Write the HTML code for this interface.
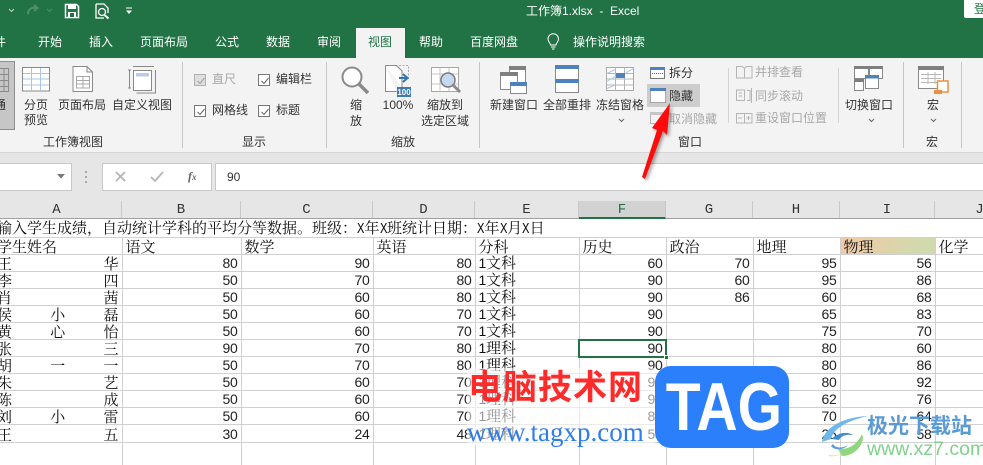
<!DOCTYPE html>
<html><head><meta charset="utf-8"><style>
*{box-sizing:border-box}
html,body{margin:0;padding:0}
body{width:983px;height:465px;overflow:hidden;position:relative;background:#fff;font-family:"Liberation Sans","Noto Sans CJK SC",sans-serif;font-size:12px;color:#333}
.a{position:absolute;white-space:nowrap;line-height:16px}
.c{position:absolute;white-space:nowrap;line-height:16px;transform:translateX(-50%)}
.t{color:#fff;top:34px;font-size:12px}
.g{color:#a8a8a8}
.s{position:absolute;width:1px;background:#c6c6c6}
.cb{position:absolute;width:12px;height:12px;border:1px solid #777;background:#fff}
.cb svg{position:absolute;left:1px;top:1px}
.h{position:absolute;top:201px;height:17px;line-height:18px;text-align:center;font-family:"Liberation Mono",monospace;font-size:14px;color:#333;border-right:1px solid #c8c8c8}
table{position:absolute;left:-4px;top:219px;border-collapse:collapse;table-layout:fixed;width:1040px;font-family:"Noto Serif CJK SC","Liberation Serif",serif;font-size:15px;color:#111}
td{border-right:1px solid #d0d0d0;border-bottom:1px solid #d0d0d0;padding:0 3px 0 1px;height:17px;line-height:15px;vertical-align:bottom;white-space:nowrap;overflow:hidden}
td.n{text-align:right;font-family:"Liberation Sans",sans-serif;font-size:14px;letter-spacing:-.3px;color:#222}
td.j{text-align-last:justify;text-align:justify;white-space:normal;padding-right:3px}
td.e{padding-left:3px}
i{font-style:normal;font-family:"Liberation Sans",sans-serif;font-size:14px;letter-spacing:-.3px}
b.x{display:inline-block;width:7.500px;font-weight:normal;font-family:"Liberation Mono",monospace;font-size:15px;transform:scaleX(.83);transform-origin:0 50%}
</style></head><body>
<!-- title and tabs -->
<div style="position:absolute;left:0;top:0;width:983px;height:58px;background:#217346"></div>
<svg style="position:absolute;left:0;top:0" width="150" height="24" fill="none">
<path d="M9 9l2.500 2.500L14 9" stroke="#bcd6c7"/>
<path d="M28 14c0-5 4-7 8-6m-2-3l3.500 3-3.500 3" stroke="#4f8f6b" stroke-width="2"/>
<path d="M47 9l2.500 2.500L52 9" stroke="#4f8f6b"/>
<path d="M65.500 4.500h11l2 2v11h-13z" stroke="#fff" stroke-width="1.500"/><rect x="68" y="5" width="8" height="4" fill="#fff"/><rect x="68" y="12" width="8" height="6" fill="#fff"/><rect x="70" y="13" width="4" height="4" fill="#217346"/>
<path d="M96 4h8l4 4v5M96 4v14h8" stroke="#fff" stroke-width="1.300"/><circle cx="102" cy="12" r="3.500" stroke="#fff" stroke-width="1.300"/><path d="M104.500 15l4 3.500" stroke="#fff" stroke-width="2"/>
<path d="M126 8h6" stroke="#fff"/><path d="M126 10.500h6l-3 3.500z" fill="#fff"/>
</svg>
<div class="a" style="left:526px;top:3px;color:#fff;font-size:12px">工作簿1.xlsx&nbsp; - &nbsp;Excel</div>
<div style="position:absolute;left:964px;top:0;width:19px;height:18px;background:#fff;border-radius:0 0 0 2px;color:#217346;font-size:12px;line-height:18px;padding-left:10px;overflow:hidden;white-space:nowrap">登</div>
<div style="position:absolute;left:356px;top:28px;width:49px;height:30px;background:#f3f3f3"></div>
<div class="a t" style="left:-18px">文件</div>
<div class="a t" style="left:38px">开始</div>
<div class="a t" style="left:89px">插入</div>
<div class="a t" style="left:140px">页面布局</div>
<div class="a t" style="left:215px">公式</div>
<div class="a t" style="left:266px">数据</div>
<div class="a t" style="left:317px">审阅</div>
<div class="a t" style="left:368px;color:#217346">视图</div>
<div class="a t" style="left:419px">帮助</div>
<div class="a t" style="left:470px">百度网盘</div>
<svg style="position:absolute;left:546px;top:33px" width="15" height="18" fill="none" stroke="#fff"><path d="M4.500 12c0-2-2.500-3-2.500-6a5.200 5.200 0 0 1 10.500 0c0 3-2.500 4-2.500 6zM5 14h4.500M6 16h2.500"/></svg>
<div class="a t" style="left:573px">操作说明搜索</div>

<!-- ribbon -->
<div style="position:absolute;left:0;top:58px;width:983px;height:95px;background:#f3f3f3;border-bottom:1px solid #d6d6d6"></div>
<div style="position:absolute;left:-4px;top:61px;width:19px;height:69px;background:#c6c6c6;border:1px solid #8f8f8f"></div>
<div class="a" style="left:-18px;top:97px">普通</div>
<div class="s" style="left:182px;top:62px;height:86px"></div>
<div class="s" style="left:326px;top:62px;height:86px"></div>
<div class="s" style="left:479px;top:62px;height:86px"></div>
<div class="s" style="left:728px;top:68px;height:55px;background:#d4d4d4"></div>
<div class="s" style="left:838px;top:68px;height:55px;background:#d4d4d4"></div>
<div class="s" style="left:903px;top:62px;height:86px"></div>
<div class="s" style="left:961px;top:62px;height:86px"></div>

<svg style="position:absolute;left:0;top:58px" width="983" height="90" fill="none">
<!-- normal -->
<path d="M-1 10.500h9.500v23H-1M0 16.500h8M0 22.500h8M0 28.500h8M4 10v23" stroke="#8a8a8a"/>
<!-- page break -->
<rect x="22.500" y="9.500" width="27" height="23.500" fill="#fff" stroke="#8a8a8a"/>
<path d="M23 15.500h26M23 21h26M23 27h26M31.500 10v23M40.500 10v23" stroke="#a9c4e4"/>
<!-- page layout -->
<path d="M73 8.500h14l5.500 5.500v19.500h-19.500zM87 8.500v5.500h5.500" fill="#fff" stroke="#8a8a8a"/>
<path d="M76.500 18.500h13v11.500h-13zM76.500 22.500h13M76.500 26h13M83 18.500v11.500" stroke="#a8a8a8"/>
<!-- custom -->
<rect x="133.500" y="12.500" width="18" height="20" fill="#fff" stroke="#8a8a8a"/>
<rect x="136" y="15" width="13" height="3.500" fill="#b8cde8"/>
<path d="M133 8.500h21M155.500 12v23h-19M129.500 12v18M128 12h3M128 30h3" stroke="#8a8a8a"/>
<!-- zoom -->
<circle cx="352" cy="19" r="9.500" fill="#fff" stroke="#8a8a8a" stroke-width="2"/>
<path d="M359 26l9 9" stroke="#8a8a8a" stroke-width="3.500"/>
<!-- 100 -->
<path d="M385.500 7.500h11l5.500 5.500v16M385.500 7.500v26h11" fill="#fff" stroke="#8a8a8a"/>
<path d="M399 7.500h9.500v15" stroke="#a8a8a8" stroke-dasharray="2 1.500"/>
<path d="M399 20h8M403 16l4.500 4-4.500 4" stroke="#2f75b5" stroke-width="2"/>
<rect x="397" y="29" width="14" height="10" fill="#3e78b5"/>
<text x="404" y="37" text-anchor="middle" font-size="8" font-weight="bold" fill="#fff" font-family="Liberation Sans">100</text>
<!-- zoom to selection -->
<rect x="431.500" y="9.500" width="27" height="24" fill="#fff" stroke="#a8a8a8"/>
<path d="M432 16h26M432 26h26M440 10v23M449 10v23" stroke="#c6c6c6"/>
<circle cx="448" cy="22" r="7" fill="#c7d9ee" stroke="#7b7b7b" stroke-width="1.500"/>
<path d="M453 27l7 7" stroke="#8a8a8a" stroke-width="3"/>
<!-- new window -->
<rect x="509.500" y="8.500" width="16" height="16" fill="#fff" stroke="#8a8a8a"/><rect x="509" y="8" width="17" height="4" fill="#7f7f7f"/>
<rect x="500.500" y="14.500" width="17" height="17" fill="#fff" stroke="#8a8a8a"/><rect x="500" y="14" width="18" height="4" fill="#7f7f7f"/>
<rect x="510.500" y="24.500" width="16" height="11" fill="#fff" stroke="#8a8a8a"/><rect x="510" y="24" width="17" height="4" fill="#4f81bd"/>
<!-- arrange all -->
<rect x="555.500" y="7.500" width="23" height="27" fill="#fff" stroke="#8a8a8a"/>
<rect x="555" y="7" width="24" height="4" fill="#4f81bd"/><rect x="555" y="21" width="24" height="4" fill="#4f81bd"/>
<!-- freeze -->
<rect x="606.500" y="9.500" width="27" height="23" fill="#fff" stroke="#a8a8a8"/>
<path d="M607 15.500h26M607 21h26M607 27h26M615.500 10v23M624.500 10v23" stroke="#b5b5b5"/>
<rect x="616" y="15" width="9" height="5" fill="#4f81bd"/>
<path d="M606 16l10-5M606 24l10-6M606 31l9-4M626 15l8-5" stroke="#a9c4e4"/>
<path d="M619 61l2.500 2.500 2.500-2.500M869 61l2.500 2.500 2.500-2.500M931 61l2.500 2.500 2.500-2.500" stroke="#666"/>
<!-- hide box -->
<rect x="647" y="26" width="53" height="23" fill="#cdcdcd"/>
<!-- split -->
<rect x="650.500" y="9.500" width="14" height="11" fill="#fff" stroke="#777"/><rect x="650" y="9" width="15" height="3" fill="#4f81bd"/><path d="M652 15.500h11" stroke="#2f75b5" stroke-dasharray="1 1"/>
<!-- hide -->
<rect x="650.500" y="31.500" width="15" height="13" fill="#fff" stroke="#666" stroke-dasharray="1 1"/><rect x="650" y="30" width="16" height="3" fill="#4f81bd"/>
<!-- unhide -->
<rect x="650.500" y="54.500" width="14" height="11" fill="#f3f3f3" stroke="#b5b5b5"/><rect x="650" y="54" width="15" height="3" fill="#c6c6c6"/>
<!-- side by side -->
<path d="M736.500 8.500h6l2 2v9.500h-8zM744.500 10.500l2-2h5.500v11.500h-7.500" stroke="#b5b5b5"/>
<path d="M736.500 32v10.500h8v-10.500zM747 32.500h3v10h-3M739 35h3M739 38h3M751.500 30v15" stroke="#b5b5b5"/>
<path d="M736.500 55.500h8v9.500h-8zM744.500 55.500h7.500v9.500h-7.500zM738 60h4M746.500 60h4M748.500 58v4" stroke="#b5b5b5"/>
<!-- switch window -->
<rect x="854.500" y="8.500" width="14" height="12" fill="#fff" stroke="#8a8a8a"/><rect x="854" y="8" width="15" height="3" fill="#7f7f7f"/>
<rect x="869.500" y="8.500" width="13" height="12" fill="#fff" stroke="#8a8a8a"/><rect x="869" y="8" width="14" height="3" fill="#7f7f7f"/>
<rect x="854.500" y="21.500" width="9" height="11" fill="#fff" stroke="#8a8a8a"/><rect x="854" y="21" width="10" height="3" fill="#7f7f7f"/>
<rect x="865.500" y="17.500" width="13" height="13" fill="#fff" stroke="#8a8a8a"/><rect x="865" y="17" width="14" height="3.500" fill="#4f81bd"/>
<!-- macro -->
<rect x="918.500" y="8.500" width="25" height="22" fill="#fff" stroke="#8a8a8a"/><rect x="918" y="8" width="26" height="4" fill="#7f7f7f"/>
<path d="M921 16.500h20M921 20.500h20M921 24.500h20M928 14v12M935 14v12" stroke="#b8b8b8"/>
<path d="M937.500 23h10.500v11h-10.500z" fill="#fff" stroke="#e8923f" stroke-width="1.500"/><path d="M934 32h8v4h-8z" fill="#e8923f"/>
</svg>

<div class="cb g" style="left:194px;top:74px;background:#dedede;border-color:#b0b0b0"><svg width="10" height="10" fill="none" stroke="#a0a0a0"><path d="M1.500 5l2.500 2.500 4.500-5.500"/></svg></div>
<div class="cb" style="left:258px;top:74px"><svg width="10" height="10" fill="none" stroke="#666"><path d="M1.500 5l2.500 2.500 4.500-5.500"/></svg></div>
<div class="cb" style="left:194px;top:105px"><svg width="10" height="10" fill="none" stroke="#666"><path d="M1.500 5l2.500 2.500 4.500-5.500"/></svg></div>
<div class="cb" style="left:258px;top:105px"><svg width="10" height="10" fill="none" stroke="#666"><path d="M1.500 5l2.500 2.500 4.500-5.500"/></svg></div>
<div class="a g" style="left:212px;top:71px">直尺</div>
<div class="a" style="left:276px;top:71px">编辑栏</div>
<div class="a" style="left:212px;top:102px">网格线</div>
<div class="a" style="left:276px;top:102px">标题</div>

<div class="c" style="left:36px;top:97px">分页</div>
<div class="c" style="left:36px;top:112px">预览</div>
<div class="c" style="left:82px;top:97px">页面布局</div>
<div class="c" style="left:142px;top:97px">自定义视图</div>
<div class="c" style="left:73px;top:134px">工作簿视图</div>
<div class="c" style="left:254px;top:134px">显示</div>
<div class="c" style="left:356px;top:97px">缩</div>
<div class="c" style="left:356px;top:113px">放</div>
<div class="c" style="left:398px;top:97px">100%</div>
<div class="c" style="left:445px;top:97px">缩放到</div>
<div class="c" style="left:445px;top:113px">选定区域</div>
<div class="c" style="left:403px;top:134px">缩放</div>
<div class="c" style="left:514px;top:97px">新建窗口</div>
<div class="c" style="left:567px;top:97px">全部重排</div>
<div class="c" style="left:620px;top:97px">冻结窗格</div>
<div class="a" style="left:669px;top:65px">拆分</div>
<div class="a" style="left:669px;top:88px">隐藏</div>
<div class="a g" style="left:669px;top:111px">取消隐藏</div>
<div class="c" style="left:690px;top:134px">窗口</div>
<div class="a g" style="left:755px;top:64px">并排查看</div>
<div class="a g" style="left:755px;top:88px">同步滚动</div>
<div class="a g" style="left:755px;top:110px">重设窗口位置</div>
<div class="c" style="left:869px;top:97px">切换窗口</div>
<div class="c" style="left:933px;top:97px">宏</div>
<div class="c" style="left:932px;top:134px">宏</div>

<!-- formula bar -->
<div style="position:absolute;left:0;top:153px;width:983px;height:48px;background:#e6e6e6"></div>
<div style="position:absolute;left:-2px;top:163px;width:74px;height:28px;background:#fff;border:1px solid #c8c8c8"></div>
<svg style="position:absolute;left:56px;top:172px" width="10" height="8"><path d="M1 2h8l-4 4.500z" fill="#777"/></svg>
<svg style="position:absolute;left:84px;top:170px" width="6" height="14" fill="#aaa"><rect x="1" y="1" width="2" height="2"/><rect x="1" y="6" width="2" height="2"/><rect x="1" y="11" width="2" height="2"/></svg>
<div style="position:absolute;left:102px;top:163px;width:110px;height:28px;background:#fff;border:1px solid #c8c8c8"></div>
<svg style="position:absolute;left:112px;top:170px" width="60" height="14" fill="none" stroke="#b5b5b5" stroke-width="1.800"><path d="M4 2l9 9M13 2l-9 9"/><path d="M39 7l4 4 8-9"/></svg>
<div class="a" style="left:188px;top:168px;font-family:'Liberation Serif',serif;font-style:italic;font-weight:bold;color:#666;font-size:12px">f<span style="font-size:9px">x</span></div>
<div style="position:absolute;left:215px;top:163px;width:770px;height:28px;background:#fff;border:1px solid #c8c8c8"></div>
<div class="a" style="left:227px;top:169px;font-size:12px;color:#333">90</div>

<!-- column headers -->
<div style="position:absolute;left:0;top:201px;width:983px;height:18px;background:#e6e6e6;border-bottom:1px solid #a0a0a0"></div>
<div class="h" style="left:0;width:122px;padding-left:0"><span style="position:relative;left:-4px">A</span></div>
<div class="h" style="left:122px;width:119px">B</div>
<div class="h" style="left:241px;width:132px">C</div>
<div class="h" style="left:373px;width:102px">D</div>
<div class="h" style="left:475px;width:104px">E</div>
<div class="h" style="left:579px;width:87px;height:18px;background:#d2d2d2;border-bottom:2px solid #217346;color:#217346">F</div>
<div class="h" style="left:666px;width:87px">G</div>
<div class="h" style="left:753px;width:87px">H</div>
<div class="h" style="left:840px;width:95px">I</div>
<div class="h" style="left:935px;width:90px">J</div>

<!-- grid -->
<table>
<colgroup><col style="width:126px"><col style="width:119px"><col style="width:132px"><col style="width:102px"><col style="width:104px"><col style="width:87px"><col style="width:87px"><col style="width:87px"><col style="width:95px"><col style="width:101px"></colgroup>
<tr style="height:18px"><td colspan="10" style="border-right:0;height:18px;padding-left:1px">输入学生成绩，自动统计学科的平均分等数据。班级：<b class="x">X</b>年<b class="x">X</b>班统计日期：<b class="x">X</b>年<b class="x">X</b>月<b class="x">X</b>日</td></tr>
<tr><td>学生姓名</td><td class="e">语文</td><td class="e">数学</td><td class="e">英语</td><td class="e">分科</td><td class="e">历史</td><td class="e">政治</td><td class="e">地理</td><td class="e" style="background:linear-gradient(120deg,#f2c9a8,#cbdcae)">物理</td><td class="e">化学</td></tr>
<tr><td class="j">王华</td><td class="n">80</td><td class="n">90</td><td class="n">80</td><td class="e"><i>1</i>文科</td><td class="n">60</td><td class="n">70</td><td class="n">95</td><td class="n">56</td><td></td></tr>
<tr><td class="j">李四</td><td class="n">50</td><td class="n">70</td><td class="n">80</td><td class="e"><i>1</i>文科</td><td class="n">90</td><td class="n">60</td><td class="n">95</td><td class="n">86</td><td></td></tr>
<tr><td class="j">肖茜</td><td class="n">50</td><td class="n">60</td><td class="n">80</td><td class="e"><i>1</i>文科</td><td class="n">90</td><td class="n">86</td><td class="n">60</td><td class="n">68</td><td></td></tr>
<tr><td class="j">侯小磊</td><td class="n">50</td><td class="n">60</td><td class="n">70</td><td class="e"><i>1</i>文科</td><td class="n">90</td><td></td><td class="n">65</td><td class="n">83</td><td></td></tr>
<tr><td class="j">黄心怡</td><td class="n">50</td><td class="n">60</td><td class="n">70</td><td class="e"><i>1</i>文科</td><td class="n">90</td><td></td><td class="n">75</td><td class="n">70</td><td></td></tr>
<tr><td class="j">张三</td><td class="n">90</td><td class="n">70</td><td class="n">80</td><td class="e"><i>1</i>理科</td><td class="n">90</td><td></td><td class="n">80</td><td class="n">60</td><td></td></tr>
<tr><td class="j">胡一一</td><td class="n">50</td><td class="n">70</td><td class="n">80</td><td class="e"><i>1</i>理科</td><td class="n">90</td><td></td><td class="n">80</td><td class="n">86</td><td></td></tr>
<tr><td class="j">朱艺</td><td class="n">50</td><td class="n">60</td><td class="n">70</td><td class="e"><i>1</i>理科</td><td class="n">90</td><td></td><td class="n">80</td><td class="n">92</td><td></td></tr>
<tr><td class="j">陈成</td><td class="n">50</td><td class="n">60</td><td class="n">70</td><td class="e"><i>1</i>理科</td><td class="n">90</td><td></td><td class="n">62</td><td class="n">76</td><td></td></tr>
<tr><td class="j">刘小雷</td><td class="n">50</td><td class="n">60</td><td class="n">70</td><td class="e"><i>1</i>理科</td><td class="n">80</td><td></td><td class="n">70</td><td class="n">64</td><td></td></tr>
<tr style="height:18px"><td class="j">王五</td><td class="n">30</td><td class="n">24</td><td class="n">48</td><td class="e"><i>1</i>理科</td><td class="n">55</td><td></td><td class="n">25</td><td class="n">58</td><td></td></tr>
<tr style="height:23px"><td style="border-bottom:0"></td><td style="border-bottom:0"></td><td style="border-bottom:0"></td><td style="border-bottom:0"></td><td style="border-bottom:0"></td><td style="border-bottom:0"></td><td style="border-bottom:0"></td><td style="border-bottom:0"></td><td style="border-bottom:0"></td><td style="border-bottom:0"></td></tr>
</table>
<!-- selected cell -->
<div style="position:absolute;left:578px;top:339px;width:89px;height:19px;border:2px solid #217346"></div>
<div style="position:absolute;left:664px;top:355px;width:5px;height:5px;background:#217346;border:1px solid #fff"></div>

<!-- watermarks -->
<div style="position:absolute;left:467px;top:368px;width:188px;height:78px;background:rgba(255,255,255,.55)"></div>
<div class="a" style="left:468px;top:370px;line-height:36px;font-size:34px;font-weight:bold;color:#ff2a2a;letter-spacing:1px">电脑技术网</div>
<div class="a" style="left:467px;top:416px;line-height:32px;font-size:27px;color:#2f7de8;font-family:'Liberation Serif',serif">www.tagxp.com</div>
<div style="position:absolute;left:655px;top:366px;width:134px;height:82px;background:#2b7ffb;border-radius:16px"></div>
<div style="position:absolute;left:655px;top:366px;width:134px;height:82px;color:#fff;font-weight:bold;font-size:68px;line-height:82px;text-align:center;transform:scaleX(.84);font-family:'Liberation Sans',sans-serif">TAG</div>
<svg style="position:absolute;left:820px;top:413px" width="52" height="44" fill="none">
<path d="M2 29C4 14 24 4 48 3 30 7 14 14 11 26z" fill="#6db7ea"/>
<path d="M12 26c5-6 15-8 21-4-7-1-12 1-14 5z" fill="#3f8fd0"/>
<path d="M18 36c12 1 20-6 24-15 4 8-6 22-20 22z" fill="#8fd67f"/>
<path d="M9 42c6 1 10 0 14-2-3 2-8 4-14 3z" fill="#e6e07a"/>
<path d="M13 31c2 4 9 5 15 1-4 5-13 6-17 1z" fill="#5b9bd5"/>
</svg>
<div class="a" style="left:867px;top:412px;line-height:30px;font-size:21px;font-weight:bold;color:#5b9bd5">极光下载站</div>
<div class="a" style="left:867px;top:439px;line-height:20px;font-size:19.500px;color:#7fd18b">www.xz7.com</div>

<!-- arrow -->
<svg style="position:absolute;left:630px;top:95px;filter:drop-shadow(2px 2px 1.500px rgba(0,0,0,.35))" width="50" height="90">
<path d="M40 8L22 33l5 2L12 82l3 2L33 36l4 4z" fill="#ff0b0b"/>
</svg>
</body></html>
